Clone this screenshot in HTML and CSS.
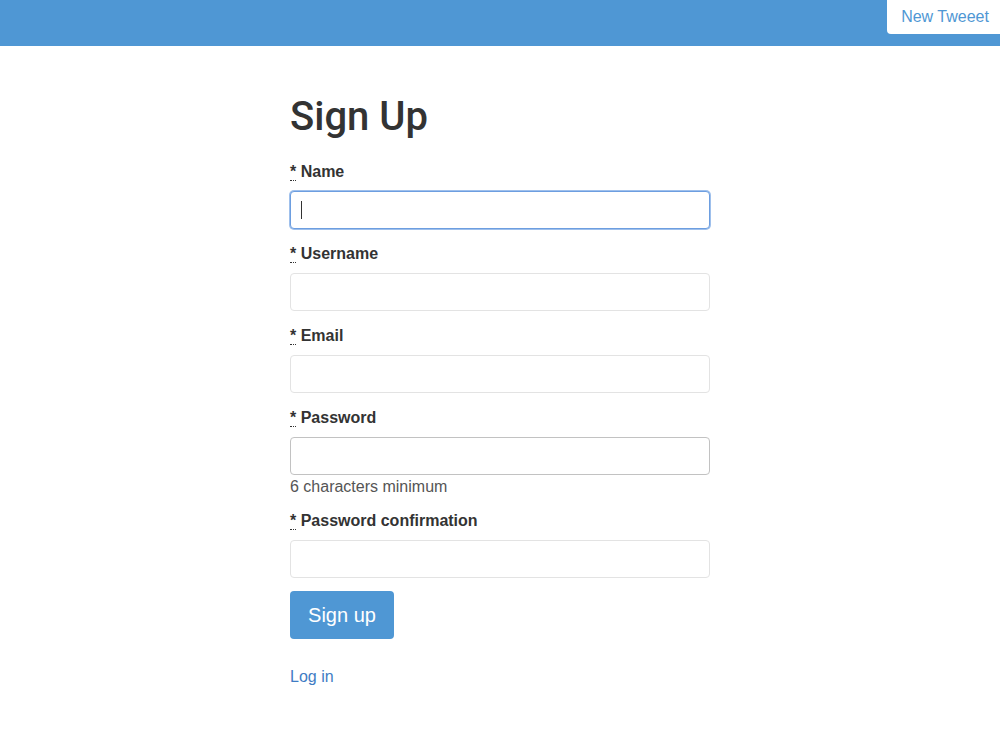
FILE: index.html
```html
<!DOCTYPE html>
<html>
<head>
<meta charset="utf-8">
<link rel="stylesheet" href="styles.css">
</head>
<body>
<header class="topbar">
  <a class="tab" href="#">New Tweeet</a>
</header>
<main class="page">
  <h1 class="title">Sign Up</h1>
  <form class="form">
    <div class="field">
      <label class="label"><abbr title="required">*</abbr> Name</label>
      <div class="input-wrap">
        <input class="input focused" type="text">
        <span class="caret"></span>
      </div>
    </div>
    <div class="field">
      <label class="label"><abbr title="required">*</abbr> Username</label>
      <input class="input" type="text">
    </div>
    <div class="field">
      <label class="label"><abbr title="required">*</abbr> Email</label>
      <input class="input" type="email">
    </div>
    <div class="field field-hint">
      <label class="label"><abbr title="required">*</abbr> Password</label>
      <input class="input dark" type="password">
      <p class="hint">6 characters minimum</p>
    </div>
    <div class="field">
      <label class="label"><abbr title="required">*</abbr> Password confirmation</label>
      <input class="input" type="password">
    </div>
    <button class="btn" type="button">Sign up</button>
  </form>
  <a class="link" href="#">Log in</a>
</main>
</body>
</html>
```
FILE: styles.css
```css
html, body {
  margin: 0;
  padding: 0;
  background: #fff;
}
body {
  font-family: "Liberation Sans", Arial, sans-serif;
  color: #333;
  font-size: 16px;
}
.topbar {
  height: 46px;
  background: #4f97d4;
  display: flex;
  justify-content: flex-end;
  align-items: flex-start;
}
.tab {
  display: block;
  width: 113px;
  height: 34px;
  line-height: 33px;
  box-sizing: border-box;
  padding-left: 3px;
  text-align: center;
  background: #fff;
  color: #4f97d4;
  text-decoration: none;
  font-size: 16px;
  border-bottom-left-radius: 4px;
}
.page {
  width: 420px;
  margin: 0 auto;
  padding-top: 47px;
}
.title {
  font-family: Roboto, "Liberation Sans", sans-serif;
  font-size: 40px;
  line-height: 48px;
  font-weight: 500;
  margin: 0 0 19px 0;
  color: #333;
}
.form {
  margin: 0;
}
.field {
  margin-bottom: 13px;
}
.label {
  display: block;
  font-weight: 700;
  line-height: 24px;
  margin-bottom: 7px;
}
.label abbr {
  text-decoration: none;
  border-bottom: 1px dotted #333;
  cursor: help;
}
.input-wrap {
  position: relative;
}
.input {
  display: block;
  width: 100%;
  height: 38px;
  box-sizing: border-box;
  border: 1px solid #e3e3e3;
  border-radius: 4px;
  padding: 6px 12px;
  font-size: 16px;
  font-family: inherit;
  margin: 0;
  outline: none;
  background: #fff;
}
.input.dark {
  border-color: #c2c2c2;
}
.input.focused {
  border: 1px solid #6d9ee0;
  box-shadow: 0 0 0 1px #9fc0ec;
}
.caret {
  position: absolute;
  left: 11px;
  top: 10px;
  width: 1px;
  height: 18px;
  background: #333;
}
.hint {
  margin: 1px 0 0 0;
  line-height: 22px;
  color: #555;
}
.field-hint {
  margin-bottom: 11px;
}
.btn {
  display: block;
  width: 104px;
  height: 48px;
  margin-top: 0;
  background: #4f97d4;
  color: #fff;
  border: none;
  border-radius: 4px;
  font-family: inherit;
  font-size: 20px;
  padding: 0;
}
.link {
  display: inline-block;
  margin-top: 26px;
  line-height: 24px;
  color: #3f7cc4;
  text-decoration: none;
}
```
